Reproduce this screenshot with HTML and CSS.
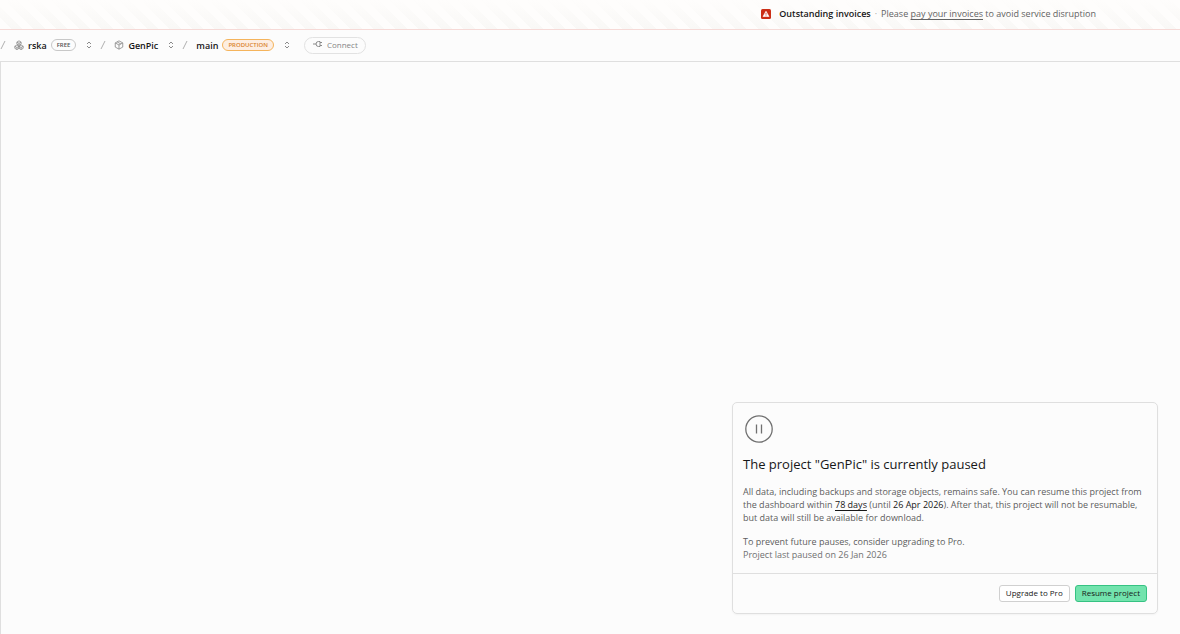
FILE: index.html
```
<!DOCTYPE html>
<html lang="en">
<head>
    <meta charset="UTF-8">
    <meta name="viewport" content="width=device-width, initial-scale=1.0">
    <title>GenPic</title>
    <link rel="stylesheet" href="styles.css">
</head>
<body>
<div class="banner">
    <svg class="banner-icon" viewBox="0 0 10 10">
        <rect width="10" height="10" rx="1.5" fill="#cb2e16"/>
        <path d="M5 2.200 8 7.500h-6z" fill="#fff" stroke="#fff" stroke-width=".6" stroke-linejoin="round"/>
        <path d="M5 4v1.700M5 6.400v.8" stroke="#cb2e16" stroke-width=".8"/>
    </svg>
    <strong>Outstanding invoices</strong>
    <span class="dot">·</span>
    <span>Please <a href="#">pay your invoices</a> to avoid service disruption</span>
</div>

<header class="topbar">
    <svg class="slash" viewBox="0 0 6 10"><path d="M1 9 5 1"/></svg>
    <a class="crumb" href="#">
        <svg class="icon" viewBox="0 0 24 24">
            <path d="M12 2 7 5v5l5 3 5-3V5zM7 12l-5 3v5l5 3 5-3v-5zM17 12l-5 3v5l5 3 5-3v-5zM7 5l5 3 5-3M12 8v5M2 15l5 3 5-3 5 3 5-3M7 18v5M17 18v5"/>
        </svg>
        rska
        <span class="badge">FREE</span>
    </a>
    <button class="switch" aria-label="Switch organization">
        <svg viewBox="0 0 6 8"><path d="M1 3 3 1l2 2M1 5l2 2 2-2"/></svg>
    </button>
    <svg class="slash" viewBox="0 0 6 10"><path d="M1 9 5 1"/></svg>
    <a class="crumb" href="#">
        <svg class="icon" viewBox="0 0 24 24">
            <path d="M12 2 3 7v10l9 5 9-5V7zM3 7l9 5 9-5M12 12v10M7.500 4.500l9 5"/>
        </svg>
        GenPic
    </a>
    <button class="switch" aria-label="Switch project">
        <svg viewBox="0 0 6 8"><path d="M1 3 3 1l2 2M1 5l2 2 2-2"/></svg>
    </button>
    <svg class="slash" viewBox="0 0 6 10"><path d="M1 9 5 1"/></svg>
    <a class="crumb" href="#">
        main
        <span class="badge production">PRODUCTION</span>
    </a>
    <button class="switch" aria-label="Switch branch">
        <svg viewBox="0 0 6 8"><path d="M1 3 3 1l2 2M1 5l2 2 2-2"/></svg>
    </button>
    <button class="connect" disabled>
        <svg viewBox="0 0 10 8"><path d="M0 4h3M7 2.500h2M7 5.500h2M7 1.500H5.500a2.500 2.500 0 0 0 0 5H7z"/></svg>
        Connect
    </button>
</header>

<main class="content">
    <section class="card">
        <div class="card-body">
            <svg class="pause" viewBox="0 0 28 28">
                <circle cx="14" cy="14" r="13.200"/>
                <path d="M11.500 9.500v9M16.500 9.500v9"/>
            </svg>
            <h1>The project "GenPic" is currently paused</h1>
            <p>All data, including backups and storage objects, remains safe. You can resume this project from the dashboard within <span class="days">78 days</span> (until <span class="date">26 Apr 2026</span>). After that, this project will not be resumable, but data will still be available for download.</p>
            <p>To prevent future pauses, consider upgrading to Pro.<br><span class="last-paused">Project last paused on 26 Jan 2026</span></p>
        </div>
        <div class="card-footer">
            <button class="btn">Upgrade to Pro</button>
            <button class="btn primary">Resume project</button>
        </div>
    </section>
</main>
</body>
</html>
```
FILE: styles.css
```
* {
    box-sizing: border-box;
}

body {
    display: flex;
    flex-direction: column;
    min-height: 100vh;
    margin: 0;
    background-color: #fcfcfc;
    color: #171717;
    font-family: 'Open Sans', 'Liberation Sans', sans-serif;
    font-size: 9px;
    line-height: 13px;
}

button {
    font-family: inherit;
    font-size: 8px;
    line-height: 13px;
}

.banner {
    display: flex;
    align-items: center;
    justify-content: flex-end;
    height: 30px;
    padding: 0 84px 2px 0;
    border-bottom: 1px solid #f6dad7;
    background: linear-gradient(#fefdfc, rgba(254, 253, 252, 0)), repeating-linear-gradient(45deg, #fefdfc 0 8px, #f9f8f6 8px 16px);
    color: #636363;
    font-weight: 500;
}

.banner strong {
    color: #171717;
    font-weight: 600;
}

.banner a {
    color: inherit;
    text-underline-offset: 2px;
}

.banner-icon {
    width: 10px;
    height: 10px;
    margin-right: 8px;
}

.dot {
    margin: 0 4px;
    color: #a0a0a0;
}

.topbar {
    display: flex;
    align-items: center;
    height: 32px;
    padding-bottom: 1px;
    border-bottom: 1px solid #dfdfdf;
}

.topbar svg {
    flex: none;
    fill: none;
    stroke: #8a8a8a;
    stroke-width: 1;
}

.topbar .slash {
    width: 6px;
    height: 10px;
    stroke: #b0b0b0;
}

.crumb {
    display: flex;
    align-items: center;
    margin-left: 8px;
    color: #171717;
    font-weight: 600;
    text-decoration: none;
}

.topbar .icon {
    width: 10px;
    height: 10px;
    margin-right: 4px;
    stroke-width: 2;
}

.badge {
    margin-left: 4px;
    padding: 0 5px;
    border: 1px solid #c8c8c8;
    border-radius: 6px;
    color: #525252;
    font-size: 6px;
    line-height: 10px;
}

.production {
    border-color: #f5b45c;
    background-color: #fdeee2;
    color: #d9822b;
}

.switch {
    display: flex;
    margin: 0 4px 0 6px;
    padding: 2px 4px;
    border: 0;
    background: none;
}

.switch svg {
    width: 6px;
    height: 8px;
}

.connect {
    display: flex;
    align-items: center;
    gap: 4px;
    margin-left: 6px;
    padding: 0 7px 2px 8px;
    border: 1px solid #e2e2e2;
    border-radius: 9px;
    background: none;
    color: #858585;
}

.connect svg {
    width: 10px;
    height: 8px;
}

.content {
    display: flex;
    flex: 1;
    align-items: flex-end;
    justify-content: flex-end;
    padding: 20px 22px;
    border-left: 1px solid #dfdfdf;
}

.card {
    width: 100%;
    max-width: 426px;
    border: 1px solid #dfdfdf;
    border-radius: 5px;
    box-shadow: 0 1px 2px rgba(0, 0, 0, 0.04);
}

.card-body {
    padding: 12px 10px 1px;
    color: #5c5c5c;
    font-weight: 500;
}

.pause {
    display: block;
    width: 28px;
    height: 28px;
    margin-left: 2px;
    fill: none;
    stroke: #707070;
    stroke-width: 1.3;
}

.card h1 {
    margin: 11px 0;
    color: #171717;
    font-size: 13px;
    font-weight: 500;
    line-height: 20px;
}

.card p {
    margin: 0 0 11px;
}

.last-paused {
    color: #707070;
}

.days,
.date {
    color: #171717;
}

.days {
    text-decoration: underline;
    text-underline-offset: 2px;
}

.card-footer {
    display: flex;
    justify-content: flex-end;
    gap: 5px;
    padding: 11px 10px;
    border-top: 1px solid #dfdfdf;
}

.btn {
    padding: 0 6px 2px;
    border: 1px solid #d0d0d0;
    border-radius: 3px;
    background-color: #fff;
    color: #171717;
}

.primary {
    border-color: #36c283;
    background-color: #72e3ad;
}
```
